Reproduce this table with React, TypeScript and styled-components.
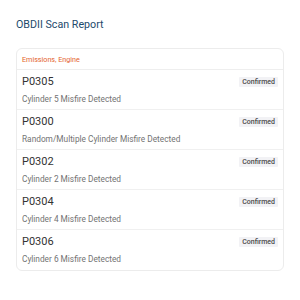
import styled, { createGlobalStyle } from "styled-components";

const GlobalStyle = createGlobalStyle`
  body {
    margin: 0;
    background: #ffffff;
    font-family: Roboto, "Liberation Sans", sans-serif;
  }
`;

const Page = styled.div`
  padding: 18px 16px 16px;
  width: 300px;
  box-sizing: border-box;
`;

const Title = styled.h1`
  margin: 0 0 16px;
  font-size: 10.7px;
  line-height: 14px;
  font-weight: 400;
  color: #1d4a6c;
`;

const Card = styled.div`
  border: 1px solid #ececec;
  border-radius: 6px;
  overflow: hidden;
`;

const CardHeader = styled.div`
  height: 20px;
  display: flex;
  align-items: center;
  padding: 0 5px;
  font-size: 7.2px;
  color: #e4622c;
  border-bottom: 1px solid #eeeeee;
`;

const Row = styled.div`
  height: 40px;
  box-sizing: border-box;
  padding: 5px 5px;
  display: flex;
  flex-direction: column;
  border-bottom: 1px solid #f0f0f0;

  &:last-child {
    border-bottom: none;
  }
`;

const RowTop = styled.div`
  display: flex;
  align-items: center;
  justify-content: space-between;
  height: 14px;
`;

const Code = styled.div`
  font-size: 11px;
  line-height: 14px;
  color: #333333;
`;

const Badge = styled.span`
  background: #f2f2f5;
  color: #4a4a4a;
  font-size: 7px;
  font-weight: 500;
  line-height: 10px;
  padding: 0 3px;
  border-radius: 1px;
`;

const Description = styled.div`
  margin-top: 4px;
  font-size: 8.3px;
  line-height: 12px;
  color: #737373;
`;

const codes = [
  { code: "P0305", desc: "Cylinder 5 Misfire Detected" },
  { code: "P0300", desc: "Random/Multiple Cylinder Misfire Detected" },
  { code: "P0302", desc: "Cylinder 2 Misfire Detected" },
  { code: "P0304", desc: "Cylinder 4 Misfire Detected" },
  { code: "P0306", desc: "Cylinder 6 Misfire Detected" },
];

export default function App() {
  return (
    <Page>
      <GlobalStyle />
      <Title>OBDII Scan Report</Title>
      <Card>
        <CardHeader>Emissions, Engine</CardHeader>
        {codes.map((c) => (
          <Row key={c.code}>
            <RowTop>
              <Code>{c.code}</Code>
              <Badge>Confirmed</Badge>
            </RowTop>
            <Description>{c.desc}</Description>
          </Row>
        ))}
      </Card>
    </Page>
  );
}
